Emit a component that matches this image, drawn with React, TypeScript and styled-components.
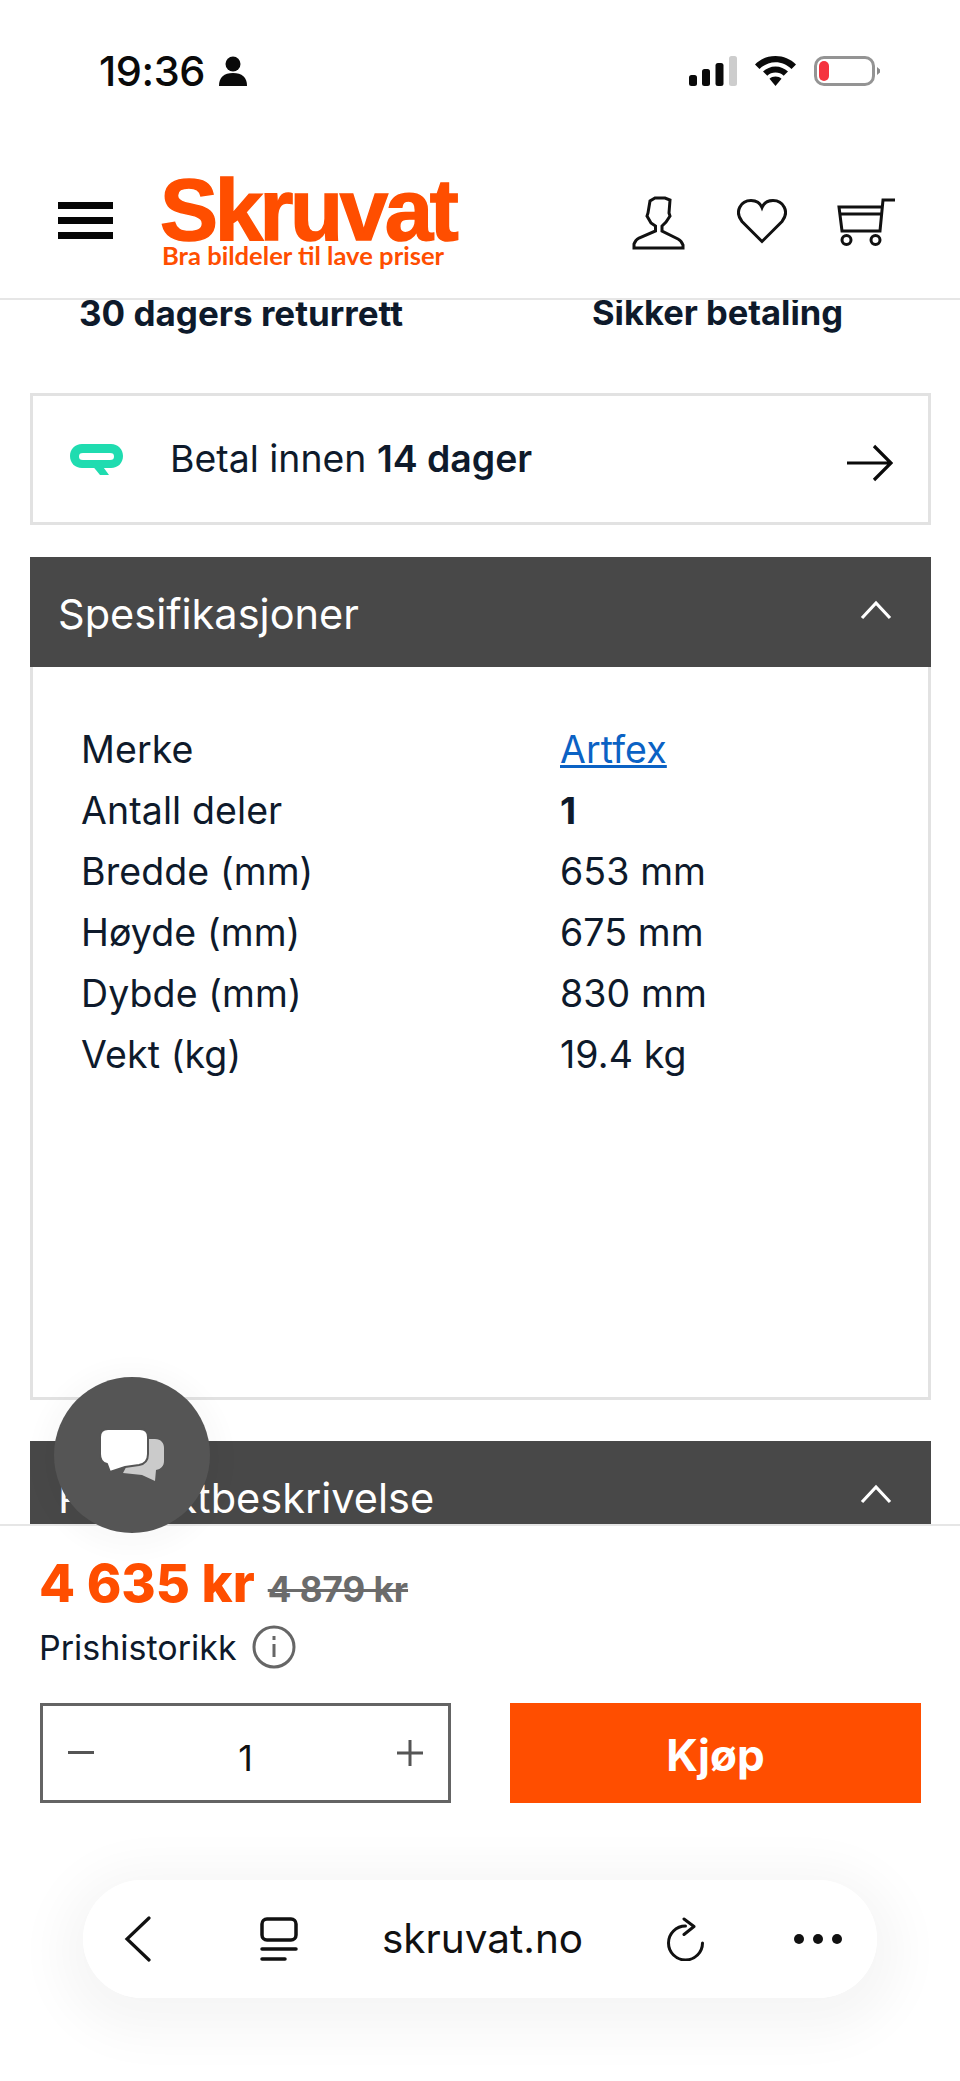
import React from 'react';
import styled, { createGlobalStyle } from 'styled-components';

const Global = createGlobalStyle`
  html, body { margin: 0; padding: 0; background: #fff; }
  * { box-sizing: border-box; }
`;

const Page = styled.div`
  position: relative;
  width: 960px;
  height: 2081px;
  overflow: hidden;
  display: flex;
  flex-direction: column;
  font-family: Inter, 'Open Sans', sans-serif;
  color: #0e1a2b;
  background: #fff;
`;

const StatusBar = styled.div`
  height: 178px;
  flex: none;
  padding: 48px 80px 0 99px;
  display: flex;
  align-items: flex-start;
  justify-content: space-between;
`;

const Clock = styled.div`
  display: flex;
  align-items: center;
  gap: 14px;
  height: 46px;
  font: 500 41.5px/46px Inter, sans-serif;
  letter-spacing: -0.4px;
  color: #0a0a0a;
`;

const StatusIcons = styled.div`
  display: flex;
  align-items: center;
  gap: 18px;
  height: 46px;
`;

const Header = styled.header`
  height: 122px;
  flex: none;
  display: flex;
  align-items: flex-start;
  justify-content: space-between;
  padding: 0 64px 0 58px;
  border-bottom: 2px solid #e6e6e6;
`;

const HeaderLeft = styled.div`
  display: flex;
  gap: 49px;
`;

const Burger = styled.div`
  width: 55px;
  height: 37px;
  margin-top: 24px;
  display: flex;
  flex-direction: column;
  justify-content: space-between;
  span {
    display: block;
    height: 7px;
    background: #050505;
  }
`;

const Logo = styled.div`
  width: 300px;
  color: #ff4e00;
  font-family: 'Liberation Sans', Arial, sans-serif;
  font-weight: 700;
`;

const LogoName = styled.div`
  margin-left: -2px;
  font-size: 87px;
  line-height: 64px;
  letter-spacing: -3.4px;
  -webkit-text-stroke: 1.5px #ff4e00;
`;

const LogoTag = styled.div`
  margin-top: -1px;
  font: 700 25.6px/28px Lato, sans-serif;
  white-space: nowrap;
`;

const HeaderIcons = styled.div`
  display: flex;
  align-items: flex-start;
  gap: 50px;
  margin-top: 18px;
`;

const HeaderIcon = styled.svg<{ $top?: number; $left?: number }>`
  margin-top: ${(p) => p.$top ?? 0}px;
  margin-left: ${(p) => p.$left ?? 0}px;
`;

const Main = styled.main`
  flex: 1;
  min-height: 0;
  overflow: hidden;
  padding: 0 29px 0 30px;
`;

const PerkRow = styled.div`
  display: flex;
  height: 93px;
  padding-left: 49px;
  font-size: 35px;
  line-height: 26px;
  font-weight: 700;
  white-space: nowrap;
`;

const Perk = styled.div<{ $width: number }>`
  width: ${(p) => p.$width}px;
  &:last-child {
    font-size: 34.5px;
  }
`;

const PayBox = styled.div`
  height: 132px;
  border: 3px solid #e2e2e2;
  display: flex;
  align-items: center;
  padding: 0 35px 0 37px;
  font-size: 37.4px;
  margin-bottom: 32px;
  span {
    margin-bottom: 2px;
  }
  svg:first-child {
    margin-right: 47px;
  }
  b {
    font-weight: 600;
  }
  svg:last-child {
    margin-left: auto;
    margin-top: 8px;
  }
`;

const AccordionHead = styled.div<{ $height: number }>`
  height: ${(p) => p.$height}px;
  background: #484848;
  color: #fff;
  display: flex;
  align-items: center;
  justify-content: space-between;
  padding: 4px 39px 0 28px;
  font-size: 41.5px;
  svg {
    margin-bottom: 8px;
  }
`;

const SpecBody = styled.div`
  height: 733px;
  border: 3px solid #e2e2e2;
  border-top: 0;
  padding: 52px 0 0 48px;
  margin-bottom: 41px;
  font-size: 37.5px;
  letter-spacing: 0.1px;
  line-height: 61px;
`;

const SpecRow = styled.div`
  display: grid;
  grid-template-columns: 479px 1fr;
  a {
    color: #0b62c4;
    text-decoration: underline;
  }
  b {
    font-weight: 700;
  }
`;

const BuyPanel = styled.section`
  height: 557px;
  flex: none;
  border-top: 2px solid #e6e6e6;
  padding: 22px 39px 0 39px;
`;

const PriceRow = styled.div`
  display: flex;
  align-items: baseline;
  gap: 13px;
  height: 70px;
`;

const Price = styled.span`
  font-size: 52.5px;
  line-height: 70px;
  font-weight: 800;
  color: #ff4e00;
`;

const OldPrice = styled.span`
  font-size: 35px;
  font-weight: 700;
  color: #6b6b6b;
  text-decoration: line-through;
`;

const History = styled.div`
  display: flex;
  align-items: center;
  gap: 15px;
  height: 54px;
  margin-top: 2px;
  font-size: 34px;
`;

const Actions = styled.div`
  display: flex;
  justify-content: space-between;
  margin-top: 29px;
  padding-left: 1px;
`;

const Quantity = styled.div`
  width: 411px;
  height: 100px;
  border: 3px solid #646464;
  display: flex;
  align-items: center;
  justify-content: space-between;
  padding: 0 25px;
  font: 400 36px/1 Inter, sans-serif;
  color: #111;
  span {
    margin-top: 10px;
  }
`;

const BuyButton = styled.button`
  width: 411px;
  height: 100px;
  border: 0;
  padding-top: 4px;
  background: #ff4e00;
  color: #fff;
  font: 700 44px/1 Inter, sans-serif;
`;

const BrowserBar = styled.nav`
  display: flex;
  gap: 20px;
  margin: 77px 44px 0 44px;
  height: 118px;
  border-radius: 59px;
  box-shadow: 0 12px 50px 24px rgba(0, 0, 0, 0.04);
`;

const RoundButton = styled.div<{ $inset?: number }>`
  flex: none;
  width: 118px;
  height: 118px;
  padding-right: ${(p) => p.$inset ?? 0}px;
  border-radius: 50%;
  background: #fff;
  display: flex;
  align-items: center;
  justify-content: center;
`;

const UrlPill = styled.div`
  flex: 1;
  height: 118px;
  border-radius: 59px;
  background: #fff;
  display: flex;
  align-items: center;
  justify-content: space-between;
  padding: 0 34px 0 39px;
  font: 400 40.5px/1 Inter, sans-serif;
  color: #111;
`;

const ChatBubble = styled.div`
  position: absolute;
  left: 54px;
  top: 1377px;
  width: 156px;
  height: 156px;
  border-radius: 50%;
  background: #555;
  box-shadow: 0 4px 22px 14px rgba(0, 0, 0, 0.025);
  display: flex;
  align-items: center;
  justify-content: center;
`;

const specs: [string, React.ReactNode][] = [
  ['Merke', <a href="#artfex">Artfex</a>],
  ['Antall deler', <b>1</b>],
  ['Bredde (mm)', '653 mm'],
  ['Høyde (mm)', '675 mm'],
  ['Dybde (mm)', '830 mm'],
  ['Vekt (kg)', '19.4 kg'],
];

const Chevron = () => (
  <svg width="32" height="20" viewBox="0 0 32 20" fill="none" stroke="#fff" strokeWidth="3.2">
    <path d="M2 18 16 3l14 15" />
  </svg>
);

export default function App() {
  return (
    <Page>
      <Global />
      <StatusBar>
        <Clock>
          19:36
          <svg width="28" height="30" viewBox="0 0 28 30" fill="#0a0a0a">
            <circle cx="14" cy="8" r="7.500" />
            <path d="M0 30c0-9 5-13 14-13s14 4 14 13z" />
          </svg>
        </Clock>
        <StatusIcons>
          <svg width="48" height="30" viewBox="0 0 48 30">
            <rect x="0" y="19" width="8" height="11" rx="2.500" fill="#0a0a0a" />
            <rect x="13" y="13" width="8" height="17" rx="2.500" fill="#0a0a0a" />
            <rect x="26.500" y="7" width="8" height="23" rx="2.500" fill="#0a0a0a" />
            <rect x="40" y="0" width="8" height="30" rx="2.500" fill="#cdcdcd" />
          </svg>
          <svg width="41" height="30" viewBox="0 0 41 30">
            <path d="M20.500 0C12.500 0 5.500 3 0 8.500l4.500 4.500c4.300-4.200 10-6.800 16-6.800s11.700 2.600 16 6.800l4.500-4.500C35.500 3 28.500 0 20.500 0z" fill="#0a0a0a" />
            <path d="M20.500 10.500c-4.800 0-9.200 2-12.500 5l4.300 4.300c2.200-2 5-3.200 8.200-3.200s6 1.200 8.200 3.200l4.300-4.300c-3.300-3-7.700-5-12.500-5z" fill="#0a0a0a" />
            <path d="M20.500 20.500c-2.400 0-4.500.9-6 2.200l6 7.300 6-7.300c-1.500-1.300-3.600-2.200-6-2.200z" fill="#0a0a0a" />
          </svg>
          <svg width="66" height="30" viewBox="0 0 66 30">
            <rect x="1.500" y="1.500" width="58" height="27" rx="8.500" fill="#fff" stroke="#949494" strokeWidth="3" />
            <rect x="5" y="5" width="10" height="20" rx="5" fill="#f5333f" />
            <path d="M63 11l3 2.500v3L63 19z" fill="#8a8a8a" />
          </svg>
        </StatusIcons>
      </StatusBar>
      <Header>
        <HeaderLeft>
          <Burger>
            <span />
            <span />
            <span />
          </Burger>
          <Logo>
            <LogoName>Skruvat</LogoName>
            <LogoTag>Bra bildeler til lave priser</LogoTag>
          </Logo>
        </HeaderLeft>
        <HeaderIcons>
          <HeaderIcon width="53" height="54" viewBox="-1 -1 53 54" fill="none" stroke="#111" strokeWidth="3">
            <path d="M1 51h49v-3c-1-3-3-5-5-6l-16-8v-5l4-4 4-6-1-3 1-13-5-2H22l-5 3-2 12-1 3 4 7 4.500 3v5L6 41c-2 1-4 3-5 6z" />
          </HeaderIcon>
          <HeaderIcon $top={3} $left={2} width="50" height="45" viewBox="1 1 50 44" fill="none" stroke="#111" strokeWidth="3">
            <path d="M26 43 6 23C-2 13 5 2 15 2c5 0 9 2 11 7 2-5 6-7 11-7 10 0 17 11 9 21z" />
          </HeaderIcon>
          <HeaderIcon $top={2} width="59" height="49" viewBox="-1 -1 59 49" fill="none" stroke="#111" strokeWidth="3">
            <path d="M57 1H45l-3 31H4L1 8h43M2 15h41" />
            <circle cx="8.500" cy="41" r="4.500" />
            <circle cx="37.500" cy="41" r="4.500" />
          </HeaderIcon>
        </HeaderIcons>
      </Header>
      <Main>
        <PerkRow>
          <Perk $width={513}>30 dagers returrett</Perk>
          <Perk $width={300}>Sikker betaling</Perk>
        </PerkRow>
        <PayBox>
          <svg width="53" height="31" viewBox="0 0 53 31">
            <path
              d="M12 0h29c7 0 12 5 12 12s-5 12-12 12H12C5 24 0 19 0 12S5 0 12 0zm1 9c-3 0-4 1-4 3.500S10 16 13 16h27c3 0 4-1 4-3.500S43 9 40 9z"
              fill="#1fdcb0"
              fillRule="evenodd"
            />
            <path d="M21 20h10l8 11h-9z" fill="#1fdcb0" />
          </svg>
          <span>
            Betal innen <b>14 dager</b>
          </span>
          <svg width="46" height="38" viewBox="0 0 46 38" fill="none" stroke="#0a0a0a" strokeWidth="3.200">
            <path d="M0 19h44M27 2l17 17-17 17" />
          </svg>
        </PayBox>
        <AccordionHead $height={110}>
          Spesifikasjoner
          <Chevron />
        </AccordionHead>
        <SpecBody>
          {specs.map(([label, value]) => (
            <SpecRow key={label}>
              <span>{label}</span>
              <span>{value}</span>
            </SpecRow>
          ))}
        </SpecBody>
        <AccordionHead $height={110}>
          Produktbeskrivelse
          <Chevron />
        </AccordionHead>
      </Main>
      <ChatBubble>
        <svg width="66" height="54" viewBox="0 0 66 54">
          <path d="M42 11h14c6 0 9 4 9 9v13c0 5-3 8-8 9l-1 11-13-6-19-2z" fill="#cbcbcb" />
          <path d="M9 1h32c5 0 8 3 8 8v17c0 6-3 10-9 11l-14 2-15 5-3-8C3 35 1 31 1 26V9c0-5 3-8 8-8z" fill="#fff" stroke="#555" strokeWidth="2" />
        </svg>
      </ChatBubble>
      <BuyPanel>
        <PriceRow>
          <Price>4 635 kr</Price>
          <OldPrice>4 879 kr</OldPrice>
        </PriceRow>
        <History>
          Prishistorikk
          <svg width="44" height="44" viewBox="0 0 44 44" fill="none" stroke="#666" strokeWidth="3">
            <circle cx="22" cy="22" r="20" />
            <path d="M22 19v13M22 11v4" />
          </svg>
        </History>
        <Actions>
          <Quantity>
            <svg width="26" height="4" viewBox="0 0 26 4">
              <rect width="26" height="3" fill="#555" />
            </svg>
            <span>1</span>
            <svg width="26" height="26" viewBox="0 0 26 26" fill="none" stroke="#555" strokeWidth="3">
              <path d="M0 13h26M13 0v26" />
            </svg>
          </Quantity>
          <BuyButton>Kjøp</BuyButton>
        </Actions>
        <BrowserBar>
          <RoundButton $inset={8}>
            <svg width="30" height="46" viewBox="0 0 30 46" fill="none" stroke="#111" strokeWidth="3.200" strokeLinecap="round">
              <path d="M26 2 4 23l22 21" />
            </svg>
          </RoundButton>
          <UrlPill>
            <svg width="38" height="44" viewBox="0 0 38 44" fill="none" stroke="#111" strokeWidth="3.500">
              <rect x="2" y="2" width="34" height="21" rx="5" />
              <path d="M2 32h34" strokeLinecap="round" />
              <path d="M2 42h23" strokeLinecap="round" />
            </svg>
            <span>skruvat.no</span>
            <svg width="38" height="44" viewBox="0 0 38 44" fill="none" stroke="#111" strokeWidth="3" strokeLinecap="round" strokeLinejoin="round">
              <path d="M35.500 26A17 17 0 1 1 18.500 9" />
              <path d="M17 2l10 7.500-10 8" />
            </svg>
          </UrlPill>
          <RoundButton>
            <svg width="50" height="12" viewBox="0 0 50 12" fill="#111">
              <circle cx="6" cy="6" r="5" />
              <circle cx="25" cy="6" r="5" />
              <circle cx="44" cy="6" r="5" />
            </svg>
          </RoundButton>
        </BrowserBar>
      </BuyPanel>
    </Page>
  );
}
